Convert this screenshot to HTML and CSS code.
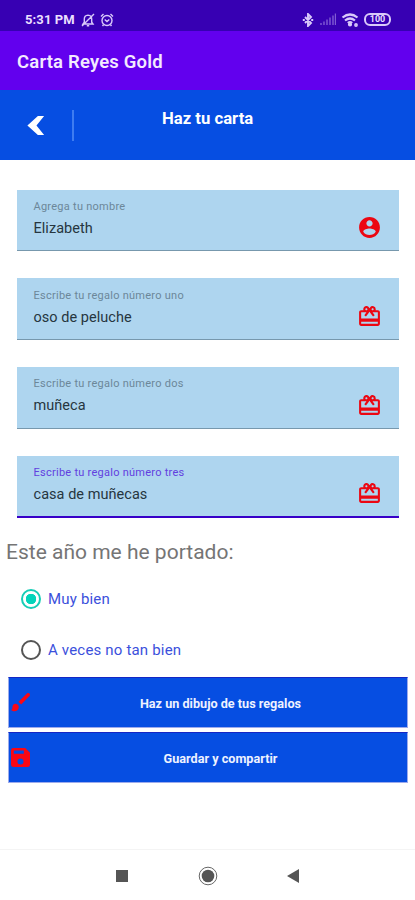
FILE: index.html
```html
<!DOCTYPE html>
<html lang="es">
<head>
    <meta charset="UTF-8">
    <meta name="viewport" content="width=device-width, initial-scale=1.0">
    <title>Carta Reyes Gold</title>
    <link rel="stylesheet" href="styles.css">
</head>
<body>
    <!-- Shared icons -->
    <svg class="sprite">
        <symbol id="icon-gift" viewBox="0 0 24 24">
            <path d="M20 6h-2.18c.11-.31.18-.65.18-1a2.996 2.996 0 0 0-5.5-1.65l-.5.67-.5-.68C10.96 2.54 10.05 2 9 2 7.34 2 6 3.34 6 5c0 .35.07.69.18 1H4c-1.11 0-1.99.89-1.99 2L2 19c0 1.11.89 2 2 2h16c1.11 0 2-.89 2-2V8c0-1.11-.89-2-2-2zm-5-2c.55 0 1 .45 1 1s-.45 1-1 1-1-.45-1-1 .45-1 1-1zM9 4c.55 0 1 .45 1 1s-.45 1-1 1-1-.45-1-1 .45-1 1-1zm11 15H4v-2h16v2zm0-5H4V8h5.08L7 10.83 8.62 12 11 8.76l1-1.36 1 1.36L15.38 12 17 10.83 14.92 8H20v6z"/>
        </symbol>
    </svg>

    <div class="status-bar">
        <span class="status-time">5:31 PM</span>
        <svg class="status-mute" viewBox="0 0 14 14"><path d="M2 11h10l-1.300-1.800V6C10.700 3.700 9.500 2.300 7 2.100 4.500 2.300 3.300 3.700 3.300 6v3.200zM5.800 12.700h2.400M1 13L13 1"/></svg>
        <svg class="status-alarm" viewBox="0 0 14 14"><circle cx="7" cy="7.500" r="5"/><path d="M1 3.500L3.500 1M13 3.500L10.500 1M4.700 6.500L7 8.500l2.300-2M3.500 11.800L2.500 13M10.500 11.800l1 1.200"/></svg>
        <div class="status-right">
            <svg class="status-bluetooth" viewBox="0 0 12 14"><path d="M3 4l6 6-3 3V1l3 3-6 6M.8 7h2M9.200 7h2"/></svg>
            <svg class="status-signal" viewBox="0 0 16 13"><path d="M1 12v-2M4 12V8.500M7 12V6.500M10 12V4.500M13 12V2.500M15.500 12V.5"/></svg>
            <svg class="status-wifi" viewBox="0 0 18 14"><path d="M1.500 4.500Q9-1.500 16.500 4.500M4 7.500Q9 3.500 14 7.500M6.800 10Q9 8.300 11.200 10"/><circle cx="9" cy="11.500" r="1"/><circle cx="15" cy="12" r=".8"/></svg>
            <span class="battery">100</span>
        </div>
    </div>

    <header class="app-bar">
        <h1>Carta Reyes Gold</h1>
    </header>

    <nav class="title-bar">
        <svg class="back" viewBox="0 0 18 22"><path d="M11 1H17.500L9.500 11l8 10H11L0 11z"/></svg>
        <span class="divider"></span>
        <h2>Haz tu carta</h2>
    </nav>

    <main>
        <div class="fields">
            <div class="field">
                <div class="field-text">
                    <span class="label">Agrega tu nombre</span>
                    <span class="value">Elizabeth</span>
                </div>
                <svg class="field-icon" viewBox="0 0 24 24"><path d="M12 2C6.480 2 2 6.480 2 12s4.480 10 10 10 10-4.480 10-10S17.520 2 12 2zm0 3c1.660 0 3 1.340 3 3s-1.340 3-3 3-3-1.340-3-3 1.340-3 3-3zm0 14.200c-2.500 0-4.710-1.280-6-3.220.03-1.990 4-3.080 6-3.080 1.990 0 5.970 1.090 6 3.080-1.290 1.940-3.500 3.220-6 3.220z"/></svg>
            </div>
            <div class="field">
                <div class="field-text">
                    <span class="label">Escribe tu regalo número uno</span>
                    <span class="value">oso de peluche</span>
                </div>
                <svg class="field-icon"><use href="#icon-gift"/></svg>
            </div>
            <div class="field">
                <div class="field-text">
                    <span class="label">Escribe tu regalo número dos</span>
                    <span class="value">muñeca</span>
                </div>
                <svg class="field-icon"><use href="#icon-gift"/></svg>
            </div>
            <div class="field focused">
                <div class="field-text">
                    <span class="label">Escribe tu regalo número tres</span>
                    <span class="value">casa de muñecas</span>
                </div>
                <svg class="field-icon"><use href="#icon-gift"/></svg>
            </div>
        </div>

        <p class="question">Este año me he portado:</p>
        <div class="options">
            <div class="option"><span class="radio checked"></span><span>Muy bien</span></div>
            <div class="option"><span class="radio"></span><span>A veces no tan bien</span></div>
        </div>

        <div class="actions">
            <button class="btn">
                <svg viewBox="0 0 20 20"><path d="M16.800.6a1.700 1.700 0 0 1 2.600 2.600L10.700 12 7.900 9.200zM4.600 11.300c2.200 0 3.600 1.400 3.600 3.400 0 2.700-2.200 4.600-4.800 4.600C2 19.300.8 18.700 0 17.700c1 0 1.500-.8 1.500-2.500 0-2.200 1.200-3.900 3.100-3.900z"/></svg>
                <span>Haz un dibujo de tus regalos</span>
            </button>
            <button class="btn">
                <svg viewBox="0 0 20 20"><path d="M2.500 0H15l5 5v12.500a2.500 2.500 0 0 1-2.500 2.500h-15A2.500 2.500 0 0 1 0 17.500v-15A2.500 2.500 0 0 1 2.500 0zM3 2.500V6h10.500V2.500zM10 11a3.200 3.200 0 1 0 0 6.400A3.200 3.200 0 1 0 10 11z" fill-rule="evenodd"/></svg>
                <span>Guardar y compartir</span>
            </button>
        </div>
    </main>

    <footer class="nav-bar">
        <svg viewBox="0 0 20 20"><path d="M4 4h12v12H4z"/></svg>
        <svg viewBox="0 0 20 20"><circle cx="10" cy="10" r="6.300"/><circle class="ring" cx="10" cy="10" r="8.800"/></svg>
        <svg viewBox="0 0 20 20"><path d="M4 10l12-7v14z"/></svg>
    </footer>
</body>
</html>
```

FILE: styles.css
```css
* {
    box-sizing: border-box;
}
body {
    margin: 0;
    height: 900px;
    display: flex;
    flex-direction: column;
    background: #fff;
    font-family: Roboto, sans-serif;
}
h1, h2, p {
    margin: 0;
}
.sprite {
    display: none;
}

/* Status bar */
.status-bar {
    height: 31px;
    padding: 8px 24px 0 25px;
    display: flex;
    align-items: center;
    background: #3700b3;
    color: #eadfff;
}
.status-bar svg {
    fill: none;
    stroke: #d9c9fa;
    stroke-width: 1.4;
}
.status-time {
    width: 50px;
    font-size: 13px;
    font-weight: 700;
    letter-spacing: 0.1px;
    white-space: nowrap;
}
.status-mute {
    width: 14px;
    height: 14px;
    margin-left: 6px;
}
.status-alarm {
    width: 14px;
    height: 14px;
    margin-left: 5px;
}
.status-right {
    margin-left: auto;
    display: flex;
    align-items: center;
}
.status-bar .status-bluetooth {
    width: 12px;
    height: 14px;
    margin-right: 6px;
    stroke-width: 1.9;
}
.status-signal {
    width: 16px;
    height: 13px;
    margin-right: 5px;
    opacity: 0.45;
}
.status-bar .status-wifi {
    width: 18px;
    height: 14px;
    margin-right: 5px;
    stroke-width: 2.2;
}
.battery {
    width: 27px;
    height: 13px;
    border: 2px solid #d9c9fa;
    border-radius: 6px;
    font-size: 9px;
    font-weight: 700;
    line-height: 9px;
    text-align: center;
}

/* Headers */
.app-bar {
    height: 59px;
    padding: 0 17px;
    display: flex;
    align-items: center;
    background: #6200ee;
    color: #f3eaff;
}
.app-bar h1 {
    font-size: 18.500px;
    font-weight: 600;
    letter-spacing: 0.18px;
    padding-top: 2px;
}
.title-bar {
    height: 70px;
    display: flex;
    align-items: flex-start;
    background: #064ee2;
    color: #fff;
}
.back {
    width: 18px;
    height: 21px;
    margin: 25px 0 0 27px;
    fill: #fff;
}
.divider {
    width: 2px;
    height: 31px;
    margin: 20px 0 0 27px;
    background: #3e7cf0;
}
.title-bar h2 {
    margin: 19px 0 0 88px;
    font-size: 16.700px;
    line-height: 20px;
    font-weight: 700;
}

/* Text fields */
.fields {
    padding: 29.500px 16px 0 16.500px;
    display: flex;
    flex-direction: column;
    gap: 27px;
}
.field {
    height: 61.750px;
    padding: 0 17px;
    display: flex;
    justify-content: space-between;
    background: #aed5ef;
    border-bottom: 1px solid #7798ad;
}
.field-text {
    display: flex;
    flex-direction: column;
    padding-top: 10.400px;
}
.label {
    font-size: 11px;
    line-height: 14px;
    letter-spacing: 0.26px;
    color: #6c8799;
}
.value {
    margin-top: 6px;
    font-size: 14.500px;
    line-height: 18px;
    letter-spacing: 0.04px;
    color: #263640;
}
.field-icon {
    width: 25px;
    height: 25px;
    margin-top: 25.500px;
    fill: #ec0712;
}
.field.focused {
    border-bottom: 2px solid #3700c8;
}
.focused .label {
    color: #6240df;
}

/* Radio options */
.question {
    margin: 21.500px 0 0 6px;
    font-size: 21px;
    line-height: 26px;
    color: #757575;
}
.options {
    padding: 23px 0 0 21px;
    display: flex;
    flex-direction: column;
    gap: 30px;
}
.option {
    height: 21px;
    display: flex;
    align-items: center;
    gap: 7px;
    font-size: 15px;
    letter-spacing: 0.18px;
    color: #3b50dc;
}
.radio {
    width: 20px;
    height: 20px;
    border: 2px solid #555;
    border-radius: 50%;
}
.radio.checked {
    border-color: #17cdb6;
    background: radial-gradient(circle, #03d4ba 5px, transparent 5.500px);
}

/* Buttons */
.actions {
    padding: 16.500px 7px 0 8px;
    display: flex;
    flex-direction: column;
    gap: 4px;
}
.btn {
    height: 51px;
    padding: 0 0 0 2px;
    display: flex;
    align-items: center;
    border: 1px solid #9dabec;
    border-top-color: #1526c4;
    background: #064ee2;
    color: #eef2ff;
    font-family: inherit;
    font-size: 12.650px;
    font-weight: 700;
}
.btn svg {
    width: 19px;
    height: 19px;
    fill: #fa0714;
}
.btn span {
    flex: 1;
    padding: 2px 0 0 4px;
    text-align: center;
}

/* System navigation */
.nav-bar {
    height: 51px;
    margin-top: auto;
    padding: 1px 112px 0;
    display: flex;
    align-items: center;
    justify-content: space-between;
    border-top: 1px solid #f4f4f4;
}
.nav-bar svg {
    width: 20px;
    height: 20px;
    fill: #555;
}
.nav-bar .ring {
    fill: none;
    stroke: #666;
    stroke-width: 1;
}
```
